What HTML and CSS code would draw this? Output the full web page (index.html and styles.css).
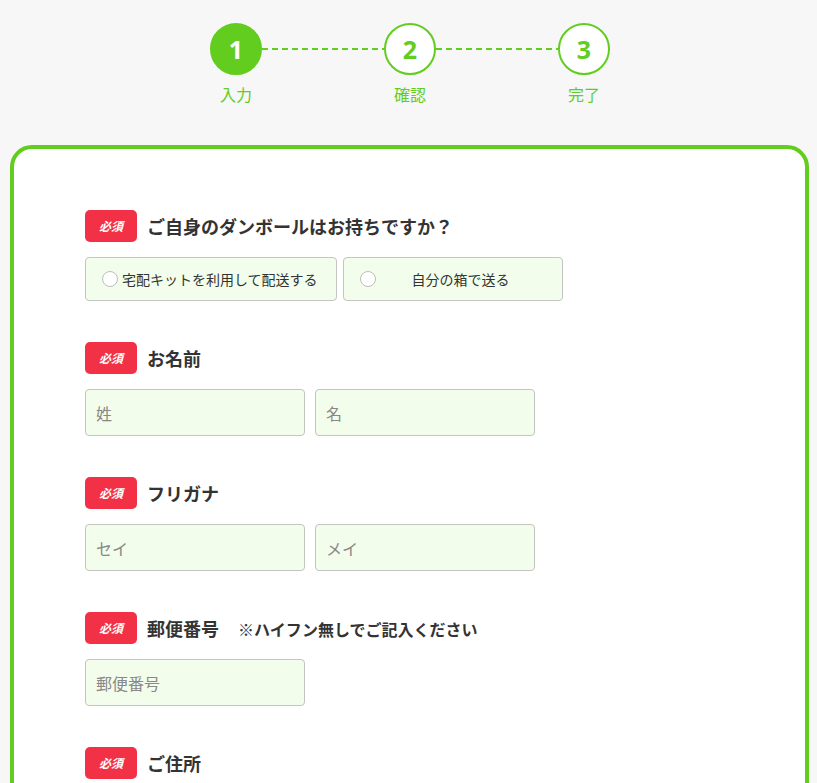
FILE: index.html
```html
<!DOCTYPE html>
<html lang="ja">
<head>
<meta charset="utf-8">
<title>お申し込みフォーム</title>
<link rel="stylesheet" href="styles.css">
</head>
<body>
<div class="page">
  <div class="steps">
    <div class="step is-active">
      <div class="step-circle">1</div>
      <div class="step-label">入力</div>
    </div>
    <div class="step-line"></div>
    <div class="step">
      <div class="step-circle">2</div>
      <div class="step-label">確認</div>
    </div>
    <div class="step-line"></div>
    <div class="step">
      <div class="step-circle">3</div>
      <div class="step-label">完了</div>
    </div>
  </div>

  <form class="card">
    <div class="field">
      <div class="field-head">
        <span class="badge">必須</span>
        <span class="field-title">ご自身のダンボールはお持ちですか？</span>
      </div>
      <div class="options">
        <label class="option option-wide">
          <input class="radio" type="radio" name="box">
          <span class="option-text">宅配キットを利用して配送する</span>
        </label>
        <label class="option option-narrow">
          <input class="radio" type="radio" name="box">
          <span class="option-text">自分の箱で送る</span>
        </label>
      </div>
    </div>

    <div class="field">
      <div class="field-head">
        <span class="badge">必須</span>
        <span class="field-title">お名前</span>
      </div>
      <div class="inputs">
        <input class="text-input" type="text" placeholder="姓">
        <input class="text-input" type="text" placeholder="名">
      </div>
    </div>

    <div class="field">
      <div class="field-head">
        <span class="badge">必須</span>
        <span class="field-title">フリガナ</span>
      </div>
      <div class="inputs">
        <input class="text-input" type="text" placeholder="セイ">
        <input class="text-input" type="text" placeholder="メイ">
      </div>
    </div>

    <div class="field">
      <div class="field-head">
        <span class="badge">必須</span>
        <span class="field-title">郵便番号<span class="field-note">※ハイフン無しでご記入ください</span></span>
      </div>
      <div class="inputs">
        <input class="text-input" type="text" placeholder="郵便番号">
      </div>
    </div>

    <div class="field">
      <div class="field-head">
        <span class="badge">必須</span>
        <span class="field-title">ご住所</span>
      </div>
      <div class="inputs">
        <input class="text-input" type="text" placeholder="都道府県">
      </div>
    </div>
  </form>
</div>
</body>
</html>
```
FILE: styles.css
```css
* {
  box-sizing: border-box;
}

html, body {
  margin: 0;
  padding: 0;
  background: #f7f7f7;
}

body {
  font-family: "Noto Sans CJK JP", "Noto Sans", sans-serif;
  color: #333;
}

.page {
  margin: 0 8px 0 10px;
}

/* steps */
.steps {
  display: flex;
  justify-content: center;
  padding-top: 23px;
  padding-left: 1px;
}

.step {
  width: 52px;
  display: flex;
  flex-direction: column;
  align-items: center;
}

.step-circle {
  width: 52px;
  height: 52px;
  border-radius: 50%;
  border: 2px solid #62cd1e;
  background: #fff;
  color: #62cd1e;
  font-family: "Noto Sans", sans-serif;
  font-weight: 700;
  font-size: 25px;
  line-height: 48px;
  text-align: center;
}

.step.is-active .step-circle {
  background: #62cd1e;
  color: #fff;
}

.step-label {
  margin-top: 7px;
  font-size: 16px;
  line-height: 24px;
  color: #62cd1e;
  white-space: nowrap;
}

.step-line {
  flex: 0 0 122px;
  height: 2px;
  margin-top: 25px;
  background: repeating-linear-gradient(90deg, #62cd1e 0 6px, transparent 6px 10px);
}

/* card */
.card {
  margin-top: 39px;
  background: #fff;
  border: 4px solid #62cd1e;
  border-radius: 22px;
  padding: 61px 71px 80px;
  min-height: 700px;
}

.field {
  margin-bottom: 41px;
}

.field-head {
  display: flex;
  align-items: center;
  gap: 10px;
  height: 32px;
}

.badge {
  width: 52px;
  height: 32px;
  border-radius: 5px;
  background: #f23147;
  color: #fff;
  font-size: 12px;
  font-weight: 700;
  line-height: 32px;
  text-align: center;
  font-style: italic;
}

.field-title {
  font-size: 18px;
  font-weight: 700;
  color: #333;
  line-height: 32px;
}

.field-note {
  font-size: 16px;
  margin-left: 19px;
}

/* options */
.options {
  display: flex;
  gap: 6px;
  margin-top: 15px;
}

.option {
  display: flex;
  align-items: center;
  height: 44px;
  padding: 0 21px 0 16px;
  background: #f3fdeb;
  border: 1px solid #c2c5c0;
  border-radius: 4px;
  cursor: pointer;
}

.option-wide {
  width: 252px;
}

.option-narrow {
  width: 220px;
}

.radio {
  appearance: none;
  -webkit-appearance: none;
  margin: 0;
  width: 16px;
  height: 16px;
  flex: 0 0 16px;
  border: 1px solid #bdbdbd;
  border-radius: 50%;
  background: #fff;
}

.option-text {
  flex: 1;
  margin-left: 4px;
  text-align: center;
  font-size: 14px;
  color: #333;
  white-space: nowrap;
}

/* inputs */
.inputs {
  display: flex;
  gap: 10px;
  margin-top: 15px;
}

.text-input {
  width: 220px;
  height: 47px;
  padding: 0 10px;
  background: #f3fdeb;
  border: 1px solid #c2c5c0;
  border-radius: 4px;
  font-family: "Noto Sans CJK JP", "Noto Sans", sans-serif;
  font-size: 16px;
  color: #333;
  outline: none;
}

.text-input::placeholder {
  color: #888;
}
```
